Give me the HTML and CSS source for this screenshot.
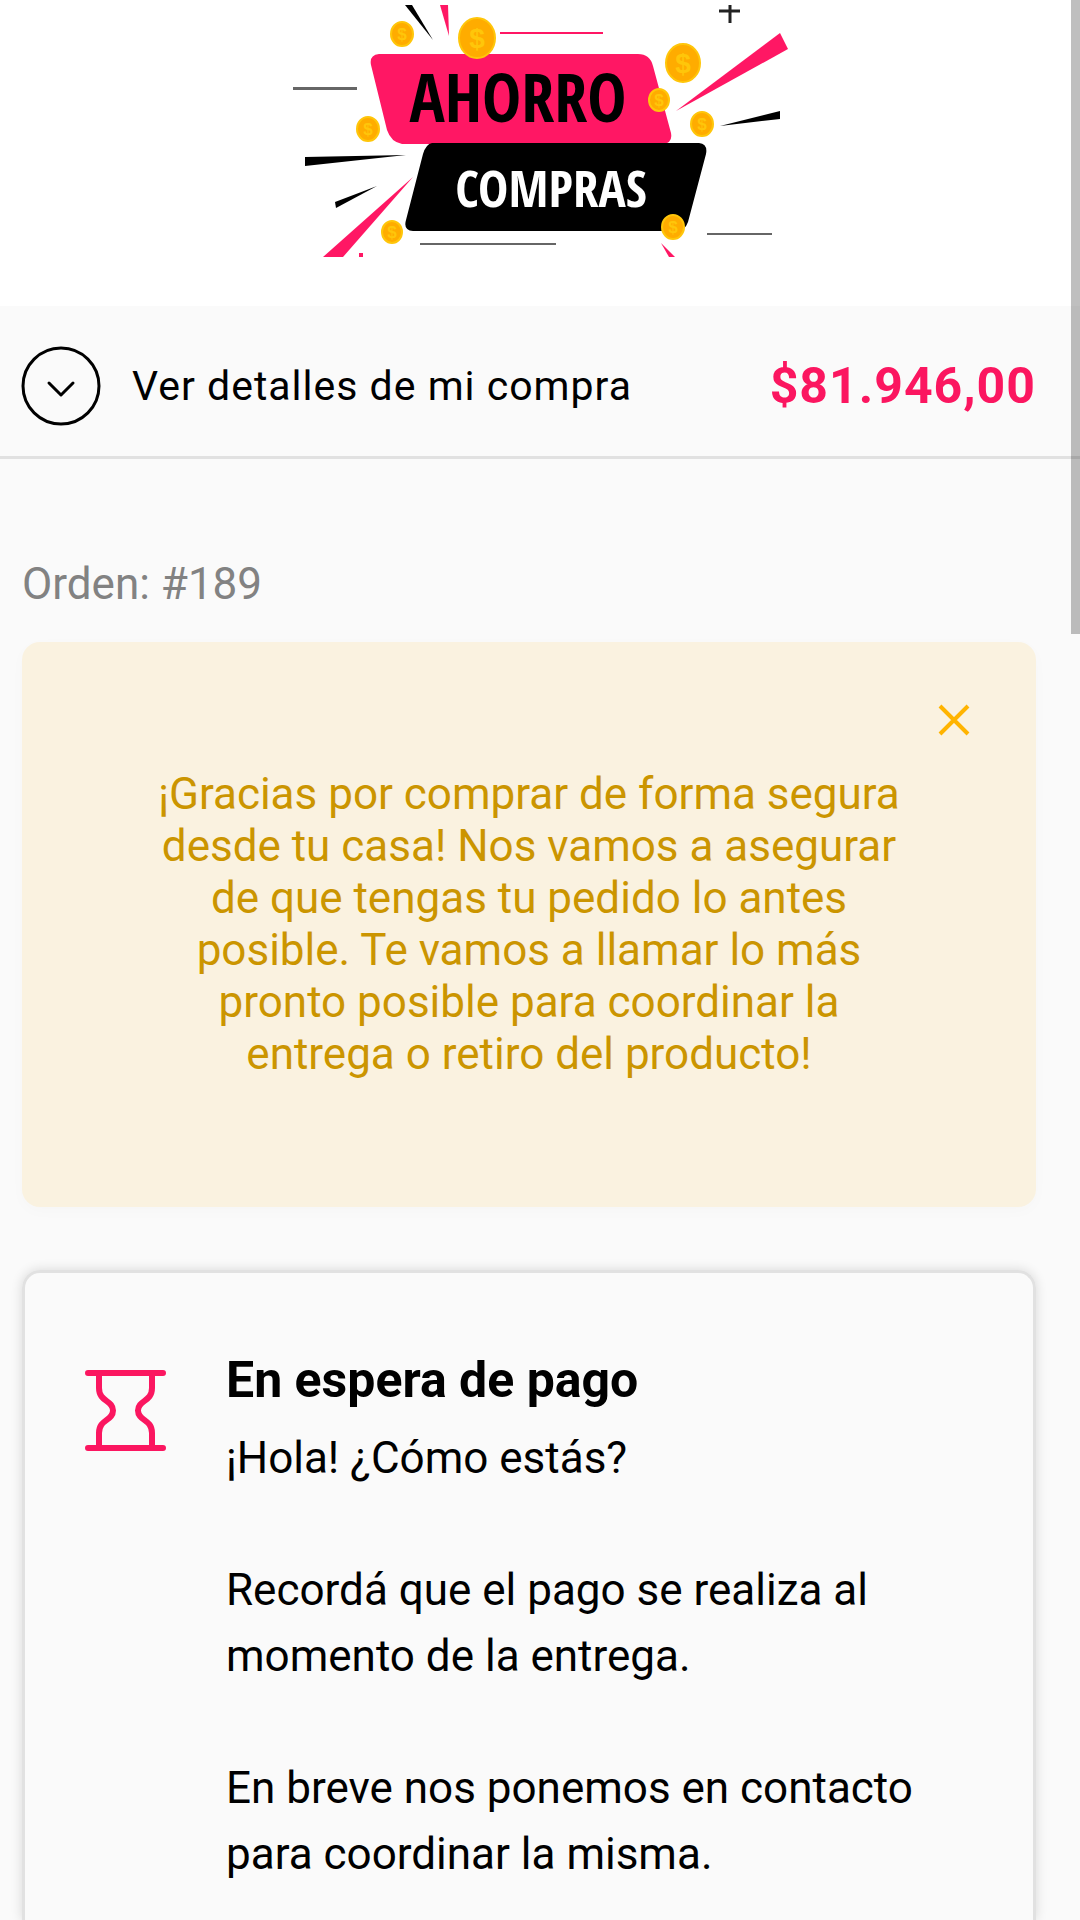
FILE: index.html
```html
<!DOCTYPE html>
<html lang="es">
<head>
<meta charset="utf-8">
<meta name="viewport" content="width=device-width, initial-scale=1">
<title>Ahorro Compras - Orden #189</title>
<link rel="stylesheet" href="styles.css">
</head>
<body>
<div class="page">
  <header class="header">
    <svg class="logo" viewBox="0 0 496 252" role="img" aria-label="Ahorro Compras">
      <g class="logo-pink">
        <path d="M148 0h8l1 31z"/>
        <path d="M31 252L121 172L51 252z"/>
        <path d="M67 252v-4h4v4z"/>
        <path d="M384 106L488 28L496 44z"/>
        <path d="M369 238L383 252h-6z"/>
        <path d="M87 49H346Q358 49 361 61L379 128Q381 139 370 139H110Q99 137 95 125L79 60Q77 50 87 49z"/>
        <rect x="208" y="27" width="103" height="2"/>
      </g>
      <g class="logo-black">
        <path d="M113 0h7l21 35z"/>
        <path d="M13 152l101-2L13 161z"/>
        <path d="M43 197L85 181L44 203z"/>
        <path d="M428 121L488 106v8z"/>
        <path d="M140 138H407Q416 139 414 149L396 217Q393 226 384 226H121Q111 225 114 215L131 149Q134 139 140 138z"/>
        <path d="M427 6h21M438 0v18" class="logo-cross"/>
      </g>
      <g class="logo-rule">
        <rect x="1" y="82" width="64" height="3"/>
        <rect x="128" y="238" width="136" height="2"/>
        <rect x="415" y="228" width="65" height="2"/>
      </g>
      <text class="logo-word logo-ahorro" x="226" y="117">AHORRO</text>
      <text class="logo-word logo-compras" x="259" y="202">COMPRAS</text>
      <g class="coins">
        <ellipse cx="110" cy="29" rx="11" ry="12"/><text x="110" y="35">$</text>
        <ellipse cx="76" cy="124" rx="11" ry="12"/><text x="76" y="130">$</text>
        <ellipse cx="100" cy="227" rx="10" ry="11"/><text x="100" y="233">$</text>
        <ellipse cx="367" cy="95" rx="10" ry="11"/><text x="367" y="101">$</text>
        <ellipse cx="410" cy="119" rx="11" ry="12"/><text x="410" y="125">$</text>
        <ellipse cx="381" cy="222" rx="11" ry="12"/><text x="381" y="228">$</text>
        <g class="coins-large">
          <ellipse cx="185" cy="33" rx="18" ry="20"/><text x="185" y="43">$</text>
          <ellipse cx="391" cy="58" rx="17" ry="19"/><text x="391" y="68">$</text>
        </g>
      </g>
    </svg>
  </header>

  <div class="summary">
    <button class="summary-toggle" type="button">
      <svg class="summary-icon" viewBox="0 0 80 80" aria-hidden="true">
        <circle cx="40" cy="40" r="38"/>
        <path d="M28 37L40 49L52 37"/>
      </svg>
      <span>Ver detalles de mi compra</span>
    </button>
    <strong class="summary-total">$81.946,00</strong>
  </div>

  <main class="content">
    <p class="order">Orden: #189</p>
    <section class="notice">
      <p class="notice-text">¡Gracias por comprar de forma segura desde tu casa! Nos vamos a asegurar de que tengas tu pedido lo antes posible. Te vamos a llamar lo más pronto posible para coordinar la entrega o retiro del producto!</p>
      <button class="notice-close" type="button" aria-label="Cerrar">
        <svg viewBox="0 0 32 32" aria-hidden="true"><path d="M2 2L30 30M30 2L2 30"/></svg>
      </button>
    </section>
    <section class="status">
      <svg class="status-icon" viewBox="0 0 82 82" aria-hidden="true">
        <path d="M3 3H78M3 78H78M14 3V18C14 32 28 30 28 40.500C28 51 14 49 14 63V78M67 3V18C67 32 53 30 53 40.500C53 51 67 49 67 63V78"/>
      </svg>
      <div class="status-body">
        <h1 class="status-title">En espera de pago</h1>
        <p>¡Hola! ¿Cómo estás?</p>
        <p>Recordá que el pago se realiza al momento de la entrega.</p>
        <p>En breve nos ponemos en contacto para coordinar la misma.</p>
      </div>
    </section>
  </main>
</div>
<div class="scroll-thumb" aria-hidden="true"></div>
</body>
</html>
```
FILE: styles.css
```css
* {
  box-sizing: border-box;
}

body {
  margin: 0;
  background: #fafafa;
  color: #000;
  font-family: Roboto, "Liberation Sans", sans-serif;
  font-size: 44px;
  line-height: 66px;
}

p,
h1 {
  margin: 0;
}

button {
  padding: 0;
  border: 0;
  background: none;
  color: inherit;
  font: inherit;
}

.page {
  display: flex;
  flex-direction: column;
  min-height: 100vh;
}

.header {
  display: flex;
  justify-content: center;
  padding: 5px 0 49px;
  background: #fff;
}

.logo {
  display: block;
  width: 496px;
  height: 252px;
}

.logo-pink {
  fill: #ff1764;
}

.logo-cross {
  fill: none;
  stroke: #222;
  stroke-width: 3px;
}

.logo-rule {
  fill: #666;
}

.logo-word {
  font-family: "Liberation Sans Narrow", "Open Sans Condensed", "Liberation Sans", sans-serif;
  font-weight: 700;
  text-anchor: middle;
}

.logo-ahorro {
  font-size: 66px;
}

.logo-compras {
  fill: #fff;
  font-size: 51px;
}

.coins {
  font-family: "Liberation Sans", sans-serif;
  font-size: 17px;
  font-weight: 700;
  text-anchor: middle;
}

.coins ellipse {
  fill: #ffac00;
  stroke: #ffc60a;
  stroke-width: 2px;
}

.coins text {
  fill: #ffc60a;
}

.coins-large {
  font-size: 28px;
}

.summary {
  display: flex;
  align-items: center;
  justify-content: space-between;
  height: 153px;
  padding: 10px 44px 0 21px;
  border-bottom: 3px solid #e1e1e1;
}

.summary-toggle {
  display: flex;
  align-items: center;
  gap: 31px;
  font-size: 41px;
  letter-spacing: 1px;
}

.summary-icon {
  width: 80px;
  height: 80px;
  fill: none;
  stroke: #000;
  stroke-width: 3px;
  stroke-linecap: round;
  stroke-linejoin: round;
}

.summary-total {
  color: #fb1660;
  font-size: 50px;
  letter-spacing: 1px;
}

.content {
  display: flex;
  flex: 1;
  flex-direction: column;
  padding: 92px 44px 0 22px;
}

.order {
  color: #828282;
}

.notice {
  position: relative;
  margin-top: 25px;
  padding: 126px 130px 127px;
  border-radius: 18px;
  background: #faf2e0;
  box-shadow: 0 4px 16px rgba(0, 0, 0, 0.02);
  color: #cb9500;
  line-height: 52px;
  text-align: center;
}

.notice-close {
  position: absolute;
  top: 62px;
  right: 66px;
  width: 32px;
  height: 32px;
}

.notice-close svg {
  display: block;
  fill: none;
  stroke: #ffb400;
  stroke-width: 4px;
}

.status {
  display: flex;
  flex: 1;
  align-items: flex-start;
  gap: 59px;
  margin-top: 63px;
  padding: 74px 60px 32px;
  border: 3px solid #e1e1e1;
  border-bottom: 0;
  border-radius: 18px 18px 0 0;
  box-shadow: 0 0 12px rgba(0, 0, 0, 0.14);
}

.status-icon {
  flex: none;
  width: 82px;
  height: 82px;
  margin-top: 23px;
  fill: none;
  stroke: #fb1660;
  stroke-width: 6px;
  stroke-linecap: round;
}

.status-title {
  margin-bottom: 12px;
  font-size: 50px;
}

.status-body p + p {
  margin-top: 66px;
}

.scroll-thumb {
  position: fixed;
  top: 0;
  right: 0;
  width: 9px;
  height: 33%;
  background: rgba(0, 0, 0, 0.25);
}
```
